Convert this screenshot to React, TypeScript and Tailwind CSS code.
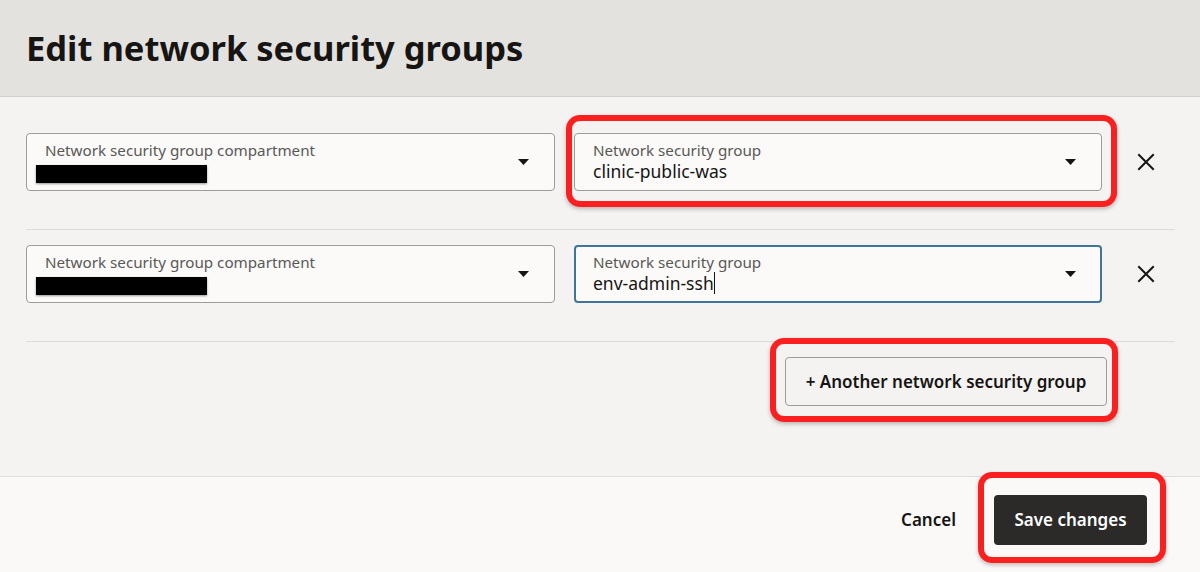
import React from 'react';

const font = { fontFamily: '"Noto Sans", "Open Sans", Arial, sans-serif' };

const Caret = () => (
  <svg width="11" height="6" viewBox="0 0 11 6" className="shrink-0">
    <path d="M0 0 H11 L5.5 6 Z" fill="#161513" />
  </svg>
);

const CloseIcon = () => (
  <svg width="18" height="18" viewBox="0 0 18 18" fill="none" stroke="#161513" strokeWidth="2" strokeLinecap="square">
    <path d="M2 2 L16 16 M16 2 L2 16" />
  </svg>
);

// red annotation frame drawn over the screenshot
const Highlight = ({ className }: { className: string }) => (
  <div
    className={`pointer-events-none absolute rounded-[14px] border-[6px] border-[#fb2020] shadow-[0_2px_4px_rgba(0,0,0,0.25)] ${className}`}
  />
);

interface FieldProps {
  label: string;
  value?: string;
  redacted?: boolean;
  focused?: boolean;
}

const SelectField: React.FC<FieldProps> = ({ label, value, redacted, focused }) => (
  <div
    className={`flex h-[58px] items-center rounded-[4px] bg-[#fbfaf9] ${
      focused ? 'border-2 border-[#3f7597] pl-[17px] pr-[24px]' : 'border border-[#9e9b98] pl-[18px] pr-[25px]'
    }`}
  >
    <div className={`flex-1 min-w-0 self-stretch ${focused ? 'pt-[6px]' : 'pt-[7px]'}`}>
      <div className="text-[15.2px] leading-[18px] text-[#5a5856]">{label}</div>
      {redacted ? (
        <div className="mt-[6px] -ml-[9px] h-[18px] w-[171px] bg-black shadow-[0_1px_2px_rgba(0,0,0,0.4)]" />
      ) : (
        <div className="flex h-[24px] items-center text-[17.5px] leading-[24px] text-[#161513]">
          {value}
          {focused && <span className="inline-block h-[22px] w-[1.5px] bg-[#161513]" />}
        </div>
      )}
    </div>
    <Caret />
  </div>
);

const Row = ({ value, focused, annotate }: { value: string; focused?: boolean; annotate?: boolean }) => (
  <div className="flex items-center border-b border-[#dedbd8] pt-[15px] pb-[38px]">
    <div className="w-[529px]">
      <SelectField label="Network security group compartment" redacted />
    </div>
    <div className="relative ml-[19px] w-[528px]">
      <SelectField label="Network security group" value={value} focused={focused} />
      {annotate && <Highlight className="-left-[8px] -right-[15px] -top-[18px] -bottom-[16px]" />}
    </div>
    <div className="flex flex-1 justify-end pr-[20px]">
      <CloseIcon />
    </div>
  </div>
);

export default function App() {
  return (
    <div className="flex h-[572px] w-full flex-col overflow-hidden bg-[#f5f3f1]" style={font}>
      <header className="flex h-[97px] shrink-0 items-center border-b border-[#d0cdca] bg-[#e4e2df] pl-[26px]">
        <h1 className="text-[34.5px] font-bold text-[#161513]">Edit network security groups</h1>
      </header>

      <main className="flex-1 pl-[26px] pr-[25px] pt-[21px]">
        <Row value="clinic-public-was" annotate />
        <Row value="env-admin-ssh" focused />
        <div className="flex justify-end pr-[68px] pt-[15px]">
          <div className="relative">
            <button className="h-[49px] w-[322px] rounded-[4px] border border-[#9e9b98] bg-[#f5f3f1] text-[17px] font-semibold text-[#161513]">
              + Another network security group
            </button>
            <Highlight className="-left-[15px] -right-[11px] -top-[19px] -bottom-[16px]" />
          </div>
        </div>
      </main>

      <footer className="flex h-[96px] shrink-0 items-center justify-end border-t border-[#dedbd8] bg-[#faf9f8] pr-[53px] pb-[9px]">
        <button className="mr-[38px] text-[17px] font-semibold text-[#161513]">Cancel</button>
        <div className="relative">
          <button className="h-[50px] w-[153px] rounded-[4px] bg-[#2b2a28] text-[17px] font-semibold text-white">
            Save changes
          </button>
          <Highlight className="-left-[16px] -right-[19px] -top-[23px] -bottom-[18px]" />
        </div>
      </footer>
    </div>
  );
}
